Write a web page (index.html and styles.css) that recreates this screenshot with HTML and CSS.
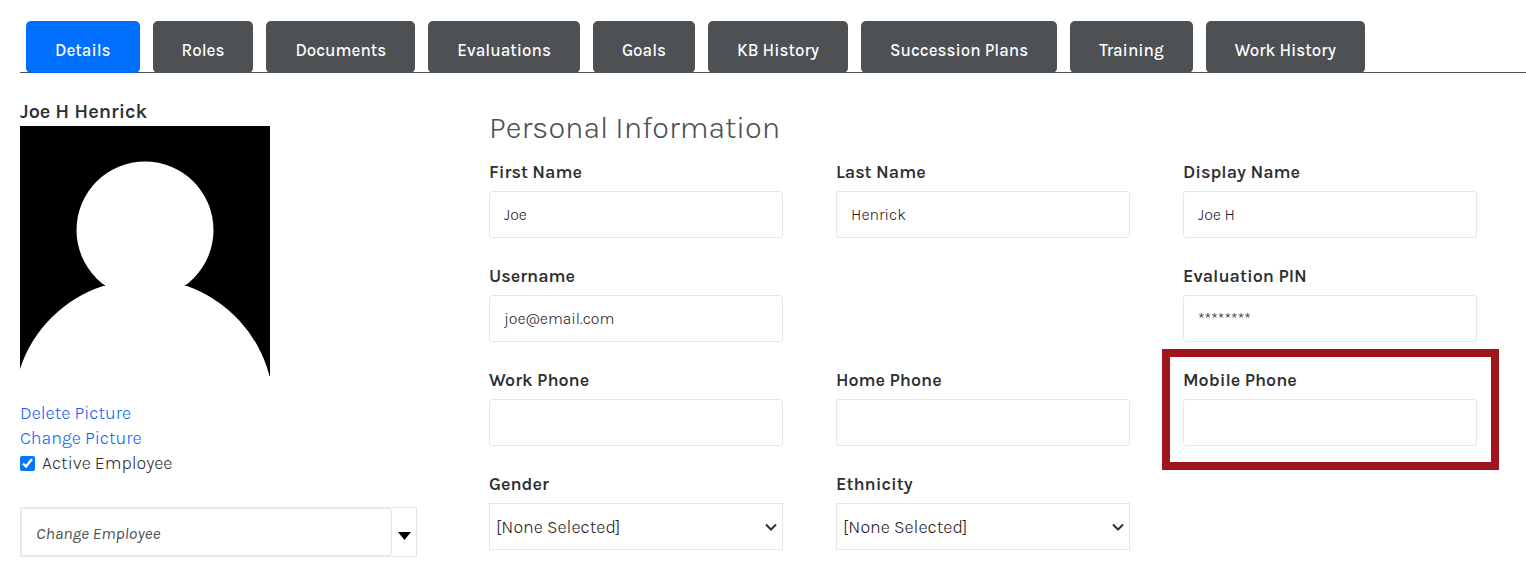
FILE: index.html
```
<!DOCTYPE html>
<html lang="en">
<head>
    <meta charset="UTF-8">
    <meta name="viewport" content="width=device-width, initial-scale=1.0">
    <title>Employee Details</title>
    <link rel="stylesheet" href="styles.css">
</head>
<body>

    <!-- Tabs -->
    <nav class="tabs">
        <a class="tab active" href="#details">Details</a>
        <a class="tab" href="#roles">Roles</a>
        <a class="tab" href="#documents">Documents</a>
        <a class="tab" href="#evaluations">Evaluations</a>
        <a class="tab" href="#goals">Goals</a>
        <a class="tab" href="#kb">KB History</a>
        <a class="tab" href="#succession">Succession Plans</a>
        <a class="tab" href="#training">Training</a>
        <a class="tab" href="#work">Work History</a>
    </nav>

    <main class="content">
        <!-- Employee summary -->
        <aside class="profile">
            <h2 class="employee-name">Joe H Henrick</h2>
            <svg class="avatar" viewBox="0 0 250 250" role="img" aria-label="Joe H Henrick">
                <rect width="250" height="250" fill="#000"/>
                <circle cx="125" cy="104" r="68.5" fill="#fff"/>
                <path d="M0 243A130 130 0 0 1 83 160H167A130 130 0 0 1 249.500 250H0z" fill="#fff"/>
            </svg>
            <div class="profile-links">
                <a href="#delete">Delete Picture</a>
                <a href="#change">Change Picture</a>
                <label class="active-check">
                    <input type="checkbox" checked>
                    Active Employee
                </label>
            </div>
            <div class="combo">
                <input class="combo-input" type="text" placeholder="Change Employee" aria-label="Change Employee">
                <button class="combo-btn" type="button" aria-label="Show employees">
                    <svg width="13" height="8" viewBox="0 0 13 8"><path d="M0 0H13L6.500 8z"/></svg>
                </button>
            </div>
        </aside>

        <!-- Personal information -->
        <form class="personal">
            <h1>Personal Information</h1>
            <div class="fields">
                <div class="field">
                    <label for="firstName">First Name</label>
                    <input type="text" id="firstName" value="Joe">
                </div>
                <div class="field">
                    <label for="lastName">Last Name</label>
                    <input type="text" id="lastName" value="Henrick">
                </div>
                <div class="field">
                    <label for="displayName">Display Name</label>
                    <input type="text" id="displayName" value="Joe H">
                </div>
                <div class="field">
                    <label for="username">Username</label>
                    <input type="text" id="username" value="joe@email.com">
                </div>
                <div class="field last-column">
                    <label for="pin">Evaluation PIN</label>
                    <input type="text" id="pin" value="********">
                </div>
                <div class="field">
                    <label for="workPhone">Work Phone</label>
                    <input type="tel" id="workPhone">
                </div>
                <div class="field">
                    <label for="homePhone">Home Phone</label>
                    <input type="tel" id="homePhone">
                </div>
                <div class="field highlight">
                    <label for="mobilePhone">Mobile Phone</label>
                    <input type="tel" id="mobilePhone">
                </div>
                <div class="field">
                    <label for="gender">Gender</label>
                    <select id="gender">
                        <option>[None Selected]</option>
                    </select>
                </div>
                <div class="field">
                    <label for="ethnicity">Ethnicity</label>
                    <select id="ethnicity">
                        <option>[None Selected]</option>
                    </select>
                </div>
            </div>
        </form>
    </main>

</body>
</html>
```
FILE: styles.css
```
* {
    box-sizing: border-box;
}

body {
    margin: 0;
    background: #fff;
    color: #2d2f31;
    font-family: Karla, Inter, "Liberation Sans", sans-serif;
    font-size: 18px;
}

a {
    color: #0d62f5;
    text-decoration: none;
}

/* Tabs */
.tabs {
    display: flex;
    gap: 13px;
    margin: 21px 0 0 20px;
    padding-left: 6px;
    border-bottom: 1px solid #4d5154;
}

.tab {
    margin-bottom: -1px;
    padding: 17px 29px 11px;
    border-radius: 5px;
    background: #4d5154;
    color: #fff;
    font-size: 17px;
    font-weight: 500;
    line-height: 24px;
    white-space: nowrap;
}

.tab.active {
    background: #006eff;
}

.content {
    display: flex;
    gap: 72px;
    padding: 25px 49px 16px 20px;
}

/* Employee summary */
.profile {
    flex: 0 0 397px;
}

.employee-name {
    margin: 0;
    font-size: 20px;
    font-weight: 600;
    line-height: 28px;
}

.avatar {
    display: block;
    width: 250px;
    height: 250px;
}

.profile-links {
    display: flex;
    flex-direction: column;
    align-items: flex-start;
    margin: 25px 0 31px;
    font-weight: 300;
    line-height: 25px;
}

.active-check {
    display: flex;
    align-items: center;
    gap: 7px;
}

.active-check input {
    width: 15px;
    height: 15px;
    margin: 0;
    accent-color: #0075ff;
}

.combo {
    display: flex;
    height: 50px;
    border: 1px solid #e3e7ea;
}

.combo-input {
    flex: 1;
    min-width: 0;
    padding: 2px 14px 0;
    border: 1px solid #e3e7ea;
    border-radius: 3px;
    font-family: inherit;
    font-size: 17px;
    font-style: italic;
    font-weight: 400;
}

.combo-input::placeholder {
    color: #4d5154;
}

.combo-btn {
    display: flex;
    align-items: center;
    justify-content: center;
    width: 24px;
    padding: 8px 0 0;
    border: 0;
    background: #fff;
}

/* Personal information */
.personal {
    flex: 1;
    min-width: 0;
}

h1 {
    margin: 10px 0 12px;
    color: #4d5154;
    font-size: 31px;
    font-weight: 300;
    line-height: 40px;
}

.fields {
    display: grid;
    grid-template-columns: repeat(3, 1fr);
    gap: 26px 53px;
}

.field {
    position: relative;
    display: flex;
    flex-direction: column;
    gap: 7px;
    min-width: 0;
}

.last-column {
    grid-column: 3;
}

.field label {
    font-weight: 600;
    line-height: 24px;
}

.field input,
.field select {
    width: 100%;
    height: 47px;
    border: 1px solid #e6e6e6;
    background: #fff;
    color: #1f2123;
    font-family: inherit;
    font-weight: 300;
}

.field input {
    padding: 0 14px;
    border-radius: 3px;
    font-size: 16px;
}

.field select {
    padding: 0 24px 0 6px;
    border-radius: 0;
    appearance: none;
    background: #fff url("data:image/svg+xml,%3Csvg xmlns='http://www.w3.org/2000/svg' width='12' height='8' viewBox='0 0 12 8'%3E%3Cpath d='M1 1.500L6 6.500L11 1.500' fill='none' stroke='%232d2f31' stroke-width='2'/%3E%3C/svg%3E") no-repeat right 5px center;
    font-size: 18px;
}

/* Red frame round the field that needs attention */
.highlight::after {
    content: "";
    position: absolute;
    inset: -19px -22px -24px -21px;
    border: 8px solid #a1161d;
    pointer-events: none;
}
```
